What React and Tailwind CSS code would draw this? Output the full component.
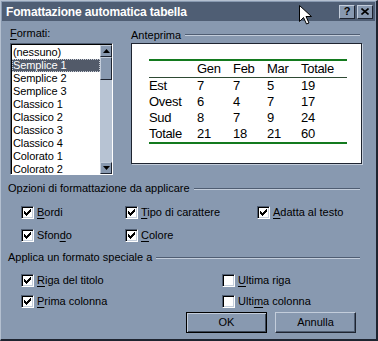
import React from "react";

function Check({ checked }) {
  return (
    <span className="flex-none w-[13px] h-[13px] bg-white border border-t-[#4f5d72] border-l-[#4f5d72] border-r-white border-b-white shadow-[inset_1px_1px_0_#000,inset_-1px_-1px_0_#c4cedb] flex items-center justify-center">
      {checked && (
        <svg width="7" height="7" viewBox="0 0 7 7" shapeRendering="crispEdges">
          <path d="M6 0h1v3h-1v1h-1v1h-1v1h-1v1h-1v-1h-1v-1h-1v-3h1v1h1v1h1v-1h1v-1h1v-1h1z" fill="#000" />
        </svg>
      )}
    </span>
  );
}

function Opt({ checked, pre = "", u, post = "" }) {
  return (
    <div className="flex items-center gap-[3px]">
      <Check checked={checked} />
      <span className="leading-[13px] whitespace-nowrap">
        {pre}
        <span className="underline underline-offset-[2px]">{u}</span>
        {post}
      </span>
    </div>
  );
}

function Etched() {
  return <div className="flex-1 h-[2px] border-t border-t-[#4f5d72] border-b border-b-[#c3cddb]" />;
}

function Arrow({ down }) {
  return (
    <svg width="7" height="4" viewBox="0 0 7 4">
      {down ? <path d="M0 0h7L3.5 4z" fill="#000" /> : <path d="M0 4h7L3.5 0z" fill="#000" />}
    </svg>
  );
}

const items = [
  "(nessuno)",
  "Semplice 1",
  "Semplice 2",
  "Semplice 3",
  "Classico 1",
  "Classico 2",
  "Classico 3",
  "Classico 4",
  "Colorato 1",
  "Colorato 2",
];

const rows = [
  ["Est", "7", "7", "5", "19"],
  ["Ovest", "6", "4", "7", "17"],
  ["Sud", "8", "7", "9", "24"],
  ["Totale", "21", "18", "21", "60"],
];

function TRow({ cells }) {
  return (
    <div className="flex h-[16px] items-center">
      <span className="w-[48px]">{cells[0]}</span>
      <span className="w-[36px]">{cells[1]}</span>
      <span className="w-[34px]">{cells[2]}</span>
      <span className="w-[34px]">{cells[3]}</span>
      <span className="w-[46px]">{cells[4]}</span>
    </div>
  );
}

export default function App() {
  return (
    <div className="relative w-[378px] h-[341px] bg-[#8899b0] border-l border-t border-l-[#b4c0d0] border-t-[#b4c0d0] border-r-2 border-b-2 border-r-[#1e2430] border-b-[#1e2430] font-['Liberation_Sans',Arial,sans-serif] text-[11px] text-black overflow-hidden">
      {/* Title bar */}
      <div className="mt-[1px] mx-[1px] h-[19px] bg-[#4f5e74] flex items-center justify-between pl-[4px] pr-[2px]">
        <span className="text-white font-bold text-[12px] leading-[14px] tracking-[-0.15px]">
          Fomattazione automatica tabella
        </span>
        <div className="flex gap-[1px]">
          <div className="w-[16px] h-[14px] bg-[#8899b0] border border-t-[#c3cddb] border-l-[#c3cddb] border-r-[#1e2430] border-b-[#1e2430] flex items-center justify-center font-bold text-[11px] leading-none">
            ?
          </div>
          <div className="ml-[1px] w-[16px] h-[14px] bg-[#8899b0] border border-t-[#c3cddb] border-l-[#c3cddb] border-r-[#1e2430] border-b-[#1e2430] flex items-center justify-center">
            <svg width="8" height="7" viewBox="0 0 8 7">
              <path d="M0.5 0.5L7.5 6.5M7.5 0.5L0.5 6.5" stroke="#000" strokeWidth="1.6" />
            </svg>
          </div>
        </div>
      </div>

      {/* Top section */}
      <div className="flex pl-[9px]">
        <div className="w-[103px]">
          <div className="h-[22px] pt-[6px] leading-[13px]">
            <span className="underline underline-offset-[2px]">F</span>ormati:
          </div>
          <div className="h-[132px] flex border border-t-[#4f5d72] border-l-[#4f5d72] border-r-white border-b-white">
            <div className="flex-1 flex border-t border-l border-black bg-white">
              <div className="flex-1 pt-[1px]">
                {items.map((it, i) => (
                  <div
                    key={it}
                    className={
                      "h-[13px] leading-[13px] pl-[1px] whitespace-nowrap tracking-[-0.1px] " +
                      (i === 1 ? "bg-[#525a69] text-white outline-1 outline-dotted outline-[#c8ccd4] -outline-offset-1" : "")
                    }
                  >
                    {it}
                  </div>
                ))}
              </div>
              <div className="w-[12px] flex flex-col bg-[#b7c3d3]">
                <div className="h-[12px] bg-[#8899b0] border border-t-[#c3cddb] border-l-[#c3cddb] border-r-[#1e2430] border-b-[#1e2430] flex items-center justify-center">
                  <Arrow />
                </div>
                <div className="h-[23px] bg-[#8899b0] border border-t-[#c3cddb] border-l-[#c3cddb] border-r-[#1e2430] border-b-[#1e2430]" />
                <div className="flex-1" />
                <div className="h-[12px] bg-[#8899b0] border border-t-[#c3cddb] border-l-[#c3cddb] border-r-[#1e2430] border-b-[#1e2430] flex items-center justify-center">
                  <Arrow down />
                </div>
              </div>
            </div>
          </div>
        </div>

        <div className="ml-[18px] w-[233px]">
          <div className="h-[22px] pt-[6px] flex items-center gap-[4px] pr-[4px] leading-[13px]">
            <span>Anteprima</span>
            <Etched />
          </div>
          <div className="w-[231px] h-[121px] bg-white border border-[#1e2430] shadow-[1px_1px_0_#c3cddb]">
            <div className="ml-[17px] mt-[15px] w-[198px] text-[13px] leading-[16px] font-['Liberation_Sans',Arial,sans-serif] tracking-[-0.3px]">
              <div className="h-[2px] bg-[#137a1e]" />
              <TRow cells={["", "Gen", "Feb", "Mar", "Totale"]} />
              <div className="h-[1px] bg-[#2e4a33]" />
              {rows.map((r) => (
                <TRow key={r[0]} cells={r} />
              ))}
              <div className="h-[2px] bg-[#137a1e]" />
            </div>
          </div>
        </div>
      </div>

      {/* Opzioni */}
      <div className="mt-[7px] h-[13px] pl-[7px] pr-[16px] flex items-center gap-[4px] leading-[13px]">
        <span className="whitespace-nowrap">Opzioni di formattazione da applicare</span>
        <Etched />
      </div>
      <div className="mt-[10px] h-[14px] pl-[20px] flex items-center">
        <div className="w-[104px]">
          <Opt checked u="B" post="ordi" />
        </div>
        <div className="w-[132px]">
          <Opt checked u="T" post="ipo di carattere" />
        </div>
        <div>
          <Opt checked u="A" post="datta al testo" />
        </div>
      </div>
      <div className="mt-[9px] h-[14px] pl-[20px] flex items-center">
        <div className="w-[104px]">
          <Opt checked pre="Sfon" u="d" post="o" />
        </div>
        <div>
          <Opt checked u="C" post="olore" />
        </div>
      </div>

      {/* Applica */}
      <div className="mt-[9px] h-[13px] pl-[7px] pr-[16px] flex items-center gap-[4px] leading-[13px]">
        <span className="whitespace-nowrap">Applica un formato speciale a</span>
        <Etched />
      </div>
      <div className="mt-[9px] h-[14px] pl-[20px] flex items-center">
        <div className="w-[201px]">
          <Opt checked u="R" post="iga del titolo" />
        </div>
        <div>
          <Opt checked={false} u="U" post="ltima riga" />
        </div>
      </div>
      <div className="mt-[7px] h-[14px] pl-[20px] flex items-center">
        <div className="w-[201px]">
          <Opt checked u="P" post="rima colonna" />
        </div>
        <div>
          <Opt checked={false} pre="Ulti" u="m" post="a colonna" />
        </div>
      </div>

      {/* Buttons */}
      <div className="mt-[4px] pl-[185px] flex gap-[8px]">
        <div className="w-[81px] h-[21px] bg-[#8899b0] border border-black shadow-[inset_1px_1px_0_#c3cddb,inset_-1px_-1px_0_#3d4858] flex items-center justify-center leading-[13px]">
          OK
        </div>
        <div className="w-[81px] h-[21px] bg-[#8899b0] border border-t-[#c3cddb] border-l-[#c3cddb] border-r-[#1e2430] border-b-[#1e2430] shadow-[inset_-1px_-1px_0_#4f5d72] flex items-center justify-center leading-[13px]">
          Annulla
        </div>
      </div>

      {/* Mouse cursor */}
      <svg className="absolute left-[298px] top-[4px]" width="13" height="20" viewBox="0 0 13 20">
        <path d="M0.5 0.5V16.5L4.5 12.5L7.5 19L10 18L7 11.5H12.5Z" fill="#fff" stroke="#000" strokeWidth="1" strokeLinejoin="miter" />
      </svg>
    </div>
  );
}
